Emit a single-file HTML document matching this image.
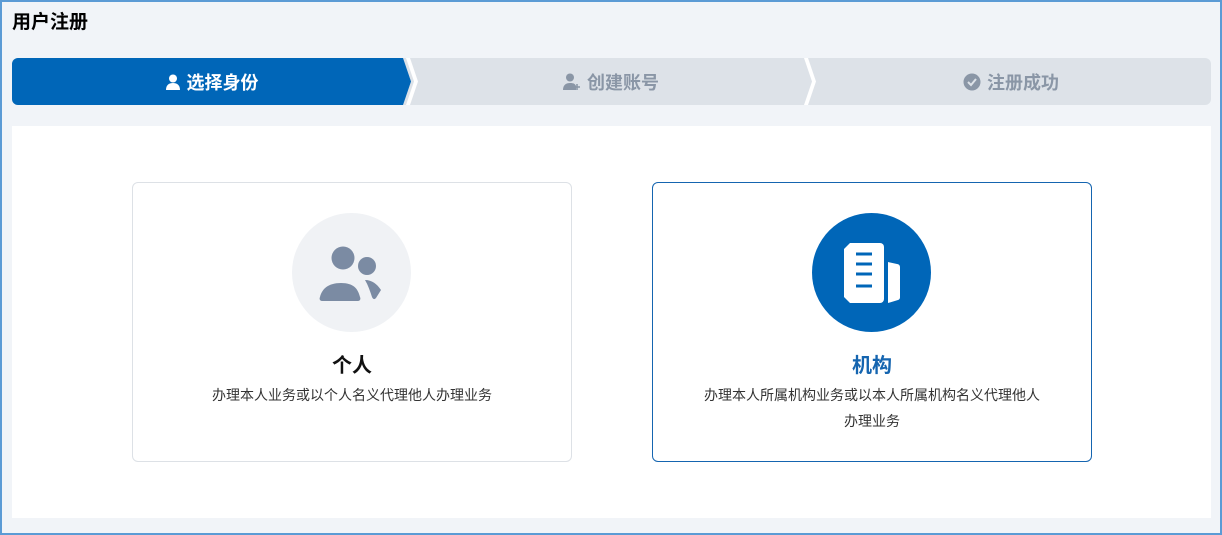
<!DOCTYPE html>
<html><head><meta charset="utf-8"><style>
*{margin:0;padding:0;box-sizing:border-box}
body{width:1222px;height:535px;background:#f1f4f8;font-family:"Liberation Sans","Noto Sans CJK SC",sans-serif;position:relative;overflow:hidden}
.frame{position:absolute;inset:0;border:2px solid #5b9bd5;pointer-events:none}
.title{position:absolute;left:12px;top:7px;font-size:19px;font-weight:bold;color:#000}
.steps{position:absolute;left:12px;top:58px;width:1199px;height:47px}
.step{position:absolute;top:0;height:47px;display:flex;align-items:center;justify-content:center;font-size:18px;font-weight:bold;gap:6px}
.panel{position:absolute;left:12px;top:126px;width:1199px;height:392px;background:#fff}
.card{position:absolute;top:182px;width:440px;height:280px;border:1px solid #dde1e6;border-radius:6px;background:#fff;text-align:center}
.card.sel{border-color:#1565b0}
.circ{position:absolute;left:159px;top:30px;width:119px;height:119px;border-radius:50%}
.h{position:absolute;top:166px;left:0;right:0;font-size:20px;font-weight:bold}
.d{position:absolute;top:199px;left:48px;right:48px;font-size:14px;color:#333;line-height:26px}
</style></head><body>
<div class="title">用户注册</div>
<div class="steps">
<svg width="1199" height="47" style="position:absolute;left:0;top:0">
<path d="M6 0H1193a6 6 0 0 1 6 6V41a6 6 0 0 1-6 6H6a6 6 0 0 1-6-6V6a6 6 0 0 1 6-6Z" fill="#dde2e8"/>
<path d="M6 0H391L399 23.5L391 47H6a6 6 0 0 1-6-6V6a6 6 0 0 1 6-6Z" fill="#0066b8"/>
<path d="M394 0L402 23.5L394 47H398L406 23.5L398 0Z" fill="#fff"/>
<path d="M792 0L800 23.5L792 47H796L804 23.5L796 0Z" fill="#fff"/>
</svg>
<div class="step" style="left:0;width:399px;color:#fff"><svg width="16" height="16" viewBox="0 0 16 16"><circle cx="8" cy="4.5" r="4" fill="#fff"/><path d="M1 16c0-5 3-7 7-7s7 2 7 7Z" fill="#fff"/></svg>选择身份</div>
<div class="step" style="left:399px;width:400px;color:#8a96a6"><svg width="18" height="18" viewBox="0 0 18 18"><circle cx="7" cy="4.5" r="4" fill="#8a96a6"/><path d="M0 17c0-5 3-7 7-7s5 1 6 3v4Z" fill="#8a96a6"/><path d="M14 11v6M11 14h6" stroke="#8a96a6" stroke-width="1.5"/></svg>创建账号</div>
<div class="step" style="left:799px;width:400px;color:#8a96a6"><svg width="18" height="18" viewBox="0 0 18 18"><circle cx="9" cy="9" r="8.5" fill="#8a96a6"/><path d="M5 9l3 3 5-6" stroke="#dde2e8" stroke-width="2" fill="none"/></svg>注册成功</div>
</div>
<div class="panel"></div>
<div class="card" style="left:132px">
<div class="circ" style="background:#f0f2f5"><svg width="119" height="119" viewBox="0 0 119 119">
<circle cx="51" cy="45" r="11.5" fill="#7b8ba3"/><path d="M30 88c-2 0-3-2-2-4c2-8 8-14 21-14s17 6 19 14c1 2 0 4-2 4Z" fill="#7b8ba3"/>
<circle cx="75" cy="53" r="9" fill="#7b8ba3"/><path d="M73 67c7 0 12 4 16 10l-5 8c-2 2-3 1-4-1c-2-6-4-12-7-17Z" fill="#7b8ba3"/>
</svg></div>
<div class="h" style="color:#111">个人</div>
<div class="d">办理本人业务或以个人名义代理他人办理业务</div>
</div>
<div class="card sel" style="left:652px">
<div class="circ" style="background:#0066b8"><svg width="119" height="119" viewBox="0 0 119 119">
<path d="M38 30H68a4 4 0 0 1 4 4V86a4 4 0 0 1-4 4H38l-6-6V36Z" fill="#fff"/>
<path d="M76 49l9 2a3 3 0 0 1 3 3V84a3 3 0 0 1-2 3l-10 3Z" fill="#fff"/>
<path d="M44 41h16M44 51h16M44 61h16M44 73h16" stroke="#0066b8" stroke-width="3"/>
</svg></div>
<div class="h" style="color:#1565b0">机构</div>
<div class="d">办理本人所属机构业务或以本人所属机构名义代理他人办理业务</div>
</div>
<div class="frame"></div>
</body></html>
